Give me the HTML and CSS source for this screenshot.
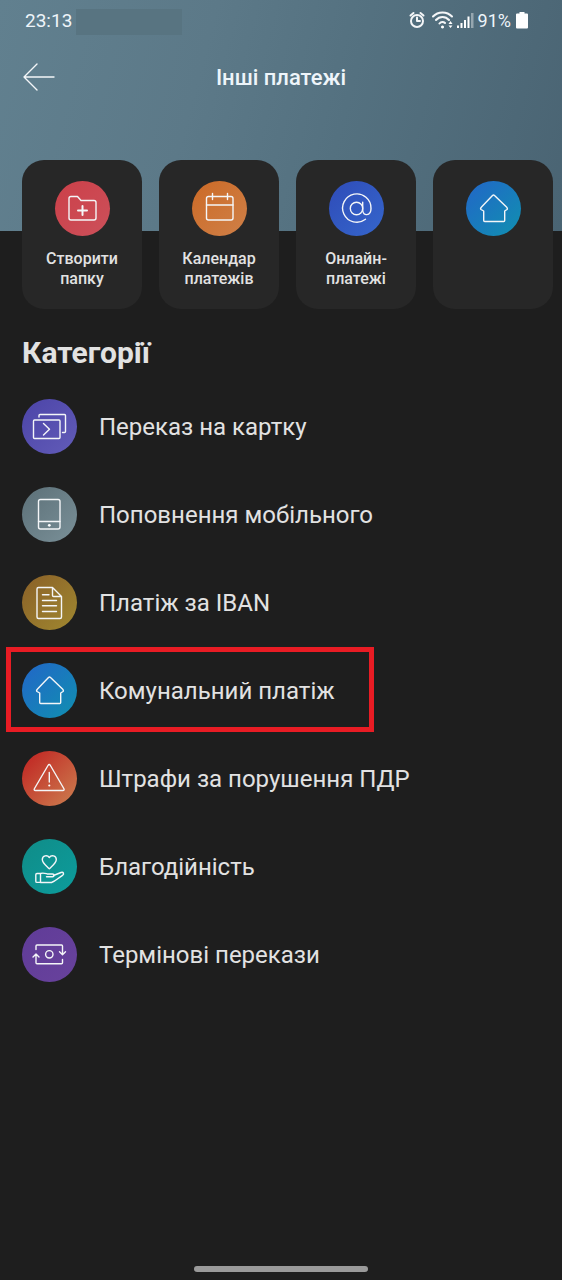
FILE: index.html
```
<!DOCTYPE html>
<html lang="uk">
<head>
  <meta charset="UTF-8" />
  <meta name="viewport" content="width=device-width, initial-scale=1" />
  <title>Інші платежі</title>
  <link rel="stylesheet" href="styles.css">
</head>

<body>

<header class="top">
  <!-- status bar -->
  <div class="status">
    <span class="clock">23:13</span>
    <span class="status-patch"></span>
    <div class="status-icons">
      <svg width="16" height="18" viewBox="0 0 16 18" class="line alarm">
        <circle cx="8" cy="10" r="6" />
        <path d="M8 6.500V10h3M1.500 4.500 4.500 2M14.500 4.500 11.500 2" />
      </svg>
      <svg width="21" height="18" viewBox="0 0 21 18" class="line wifi">
        <path d="M1 5.500C6 0 15 0 20 5.500M4 9c3.500-4 9.500-4 13 0M7.500 12.500c1.600-2 4-2 5.500-.5" />
        <path class="solid" d="M10.500 14.500a1.500 1.500 0 1 0 .01 0zM18.500 10l2 3h-4zM18.500 17l2-2.500h-4z" />
      </svg>
      <svg width="17" height="18" viewBox="0 0 17 18" class="signal">
        <path class="solid" d="M0 14.500h2V17H0zM3.500 12h2v5h-2zM7 9h2v8H7zM10.500 5.500h2V17h-2z" />
        <path class="solid dim" d="M14 2h2.500v15H14z" />
      </svg>
      <span class="percent">91%</span>
      <svg width="12" height="18" viewBox="0 0 12 18">
        <path class="solid" d="M3.500 1h5v1.500H11a1 1 0 0 1 1 1V16.500a1 1 0 0 1-1 1H1a1 1 0 0 1-1-1V3.500a1 1 0 0 1 1-1h2.500z" />
      </svg>
    </div>
  </div>

  <!-- title -->
  <div class="title-bar">
    <a href="#" class="back" aria-label="Назад">
      <svg width="32" height="28" viewBox="0 0 32 28" class="line">
        <path d="M14 1 1 14l13 13M1 14h30" />
      </svg>
    </a>
    <h1>Інші платежі</h1>
  </div>
</header>

<main>
  <!-- shortcuts -->
  <nav class="cards">
    <a href="#" class="card">
      <span class="icon red">
        <svg viewBox="0 0 55 55" class="line">
          <path d="M14 17.500a2 2 0 0 1 2-2h6.500l3.500 4h13a2 2 0 0 1 2 2V37a2 2 0 0 1-2 2H16a2 2 0 0 1-2-2z" />
          <path class="bold" d="M27.500 25v9M23 29.500h9" />
        </svg>
      </span>
      Створити папку
    </a>
    <a href="#" class="card">
      <span class="icon orange">
        <svg viewBox="0 0 55 55" class="line">
          <rect x="14.500" y="15.500" width="26.500" height="23.500" rx="2" />
          <path d="M14.500 24H41M20.500 12.500V18.500M35.500 12.500V18.500" />
        </svg>
      </span>
      Календар платежів
    </a>
    <a href="#" class="card">
      <span class="icon blue">
        <svg viewBox="0 0 55 55" class="line">
          <circle cx="27.500" cy="27.500" r="6.200" />
          <path d="M33.700 21.300v8c0 6 8.300 6 8.300-1.800A14.200 14.200 0 1 0 36.500 38.300" />
        </svg>
      </span>
      Онлайн-платежі
    </a>
    <a href="#" class="card" aria-label="Комунальний платіж">
      <span class="icon azure">
        <svg viewBox="0 0 55 55" class="line">
          <path d="M26.500 14.500q1-1 2 0L40.500 26q1.500 1.500.5 2.500l-2.300 1.500v9.500a1 1 0 0 1-1 1h-19a1 1 0 0 1-1-1V30l-2.700-1.500q-1-1 .5-2.500z" />
        </svg>
      </span>
    </a>
  </nav>

  <!-- categories -->
  <h2>Категорії</h2>
  <ul class="categories">
    <li>
      <a href="#">
        <span class="icon violet">
          <svg viewBox="0 0 55 55" class="line">
            <rect x="11.500" y="21" width="26.500" height="18.500" rx="1" />
            <path d="M17 18v-1.500a1 1 0 0 1 1-1h24.500a1 1 0 0 1 1 1v16a1 1 0 0 1-1 1h-2M21.500 24.500l6 5.700-6 5.800" />
          </svg>
        </span>
        Переказ на картку
      </a>
    </li>
    <li>
      <a href="#">
        <span class="icon gray">
          <svg viewBox="0 0 55 55" class="line">
            <rect x="16.500" y="12.500" width="21.500" height="29.500" rx="2" />
            <path d="M16.500 34.500H38" />
            <circle class="solid" cx="27.300" cy="38.300" r="1.400" />
          </svg>
        </span>
        Поповнення мобільного
      </a>
    </li>
    <li>
      <a href="#">
        <span class="icon gold">
          <svg viewBox="0 0 55 55" class="line">
            <path d="M30.500 12.500H16.500a1.500 1.500 0 0 0-1.500 1.500V42a1.500 1.500 0 0 0 1.500 1.500H38a1.500 1.500 0 0 0 1.500-1.500V21.500zV20.500a1 1 0 0 0 1 1h8" />
            <path d="M20.500 19.800H27M20.500 25.500H34.500M20.500 30.800H34.500M20.500 36.500H34.500" />
          </svg>
        </span>
        Платіж за IBAN
      </a>
    </li>
    <li>
      <a href="#" class="marked">
        <span class="icon azure">
          <svg viewBox="0 0 55 55" class="line">
            <path d="M26.500 14.500q1-1 2 0L40.500 26q1.500 1.500.5 2.500l-2.300 1.500v9.500a1 1 0 0 1-1 1h-19a1 1 0 0 1-1-1V30l-2.700-1.500q-1-1 .5-2.500z" />
          </svg>
        </span>
        Комунальний платіж
      </a>
    </li>
    <li>
      <a href="#">
        <span class="icon fire">
          <svg viewBox="0 0 55 55" class="line">
            <path d="M26 14.500q1.200-2 2.400 0L41.800 37.500q1 2-1 2H13.500q-2 0-1-2z" />
            <path d="M27.300 21.500V31" />
            <circle class="solid" cx="27.300" cy="34.500" r="1.100" />
          </svg>
        </span>
        Штрафи за порушення ПДР
      </a>
    </li>
    <li>
      <a href="#">
        <span class="icon teal">
          <svg viewBox="0 0 55 55" class="line">
            <path d="M27.300 18.500c-2-3-7-2-7 2 0 3.500 3.500 6 7 9.300 3.500-3.300 7-5.800 7-9.300 0-4-5-5-7-2z" />
            <path d="M18.500 34.500h-3.500a1.200 1.200 0 0 0-1.200 1.200v6.500a1.200 1.200 0 0 0 1.200 1.200h3.500zc3-1 5 0 7 .5h5c2 0 2 2.800 0 2.800H24.500M31.500 36.500l7.500-3c2.500-.8 3.500 1.500 1.500 2.800-4 2.500-7 6-11 7.200H18.500" />
          </svg>
        </span>
        Благодійність
      </a>
    </li>
    <li>
      <a href="#">
        <span class="icon purple">
          <svg viewBox="0 0 55 55" class="line">
            <circle cx="27.300" cy="27.300" r="3.700" />
            <path d="M14 22.500V19a1 1 0 0 1 1-1h24.500a1 1 0 0 1 1 1v8.500M37.500 24.800l3 3 3-3" />
            <path d="M40.500 32.500v3.200a1 1 0 0 1-1 1H15a1 1 0 0 1-1-1V27M11 30l3-3 3 3" />
          </svg>
        </span>
        Термінові перекази
      </a>
    </li>
  </ul>
</main>

<div class="home-bar"></div>

</body>
</html>
```
FILE: styles.css
```
* {
  box-sizing: border-box;
}

body {
  display: flex;
  flex-direction: column;
  min-height: 100vh;
  margin: 0;
  background: #1e1e1e;
  color: #e2e2e2;
  font-family: Roboto, "Noto Sans", sans-serif;
}

a {
  color: inherit;
  text-decoration: none;
}

.line {
  fill: none;
  stroke: #f4f6f8;
  stroke-width: 1.4;
  stroke-linecap: round;
  stroke-linejoin: round;
}

.bold {
  stroke-width: 2;
}

.solid {
  fill: #fff;
  stroke: none;
}

.dim {
  opacity: 0.4;
}

/* header */
.top {
  height: 231px;
  background: linear-gradient(105deg, #61808f 0%, #5c7988 35%, #547180 60%, #4a6473 100%);
  color: #eef5fa;
}

.status {
  display: flex;
  align-items: center;
  height: 40px;
  padding: 0 34px 0 25px;
  font-size: 18px;
}

.clock {
  font-size: 19px;
}

.status-patch {
  width: 106px;
  height: 26px;
  margin: 4px 0 0 4px;
  background: #587481;
}

.status-icons {
  display: flex;
  align-items: center;
  gap: 4px;
  margin-left: auto;
}

.alarm {
  stroke-width: 2;
}

.wifi {
  margin-left: 3px;
  stroke-width: 2;
}

.percent {
  margin-right: 1px;
}

.title-bar {
  display: grid;
  grid-template-columns: 32px 1fr 32px;
  align-items: center;
  height: 74px;
  padding: 0 23px;
}

.back {
  display: flex;
}

h1 {
  margin: 0;
  font-size: 22px;
  font-weight: 500;
  text-align: center;
}

/* shortcuts */
.cards {
  display: flex;
  gap: 17px;
  margin-top: -71px;
  padding-left: 22px;
  overflow: hidden;
}

.card {
  display: flex;
  flex: 0 0 120px;
  flex-direction: column;
  align-items: center;
  gap: 13px;
  height: 149px;
  padding: 21px 16px;
  border-radius: 22px;
  background: #272727;
  font-size: 16px;
  font-weight: 500;
  line-height: 20px;
  text-align: center;
}

.icon {
  flex: none;
  width: 55px;
  height: 55px;
  border-radius: 50%;
}

.icon svg {
  display: block;
}

.red { background: linear-gradient(135deg, #cc4049, #cc505a); }
.orange { background: linear-gradient(135deg, #cc6a26, #cf8048); }
.blue { background: linear-gradient(135deg, #2f4cb8, #3566cc); }
.azure { background: linear-gradient(135deg, #2266c8, #1090b0); }
.violet { background: linear-gradient(135deg, #4c44a8, #625cb8); }
.gray { background: linear-gradient(135deg, #5c7078, #7a9098); }
.gold { background: linear-gradient(135deg, #8a6028, #a08830); }
.fire { background: linear-gradient(135deg, #c02020, #cc8050); }
.teal { background: linear-gradient(135deg, #108c88, #0c9c9c); }
.purple { background: linear-gradient(135deg, #603c98, #68429c); }

/* categories */
h2 {
  margin: 26px 22px 12px;
  font-size: 30px;
  font-weight: 700;
  line-height: 36px;
}

.categories {
  margin: 0;
  padding: 0 22px;
  list-style: none;
}

.categories li {
  display: flex;
}

.categories a {
  display: flex;
  align-items: flex-start;
  gap: 22px;
  padding: 16px 0;
  font-size: 24px;
  line-height: 56px;
}

/* red frame around the selected category */
.marked {
  position: relative;
}

.marked::after {
  content: "";
  position: absolute;
  inset: 0 -39px 3px -16px;
  border: 5px solid #e81c24;
}

.home-bar {
  width: 31%;
  height: 6px;
  margin: auto auto 8px;
  border-radius: 3px;
  background: #9a9a9a;
}
```
